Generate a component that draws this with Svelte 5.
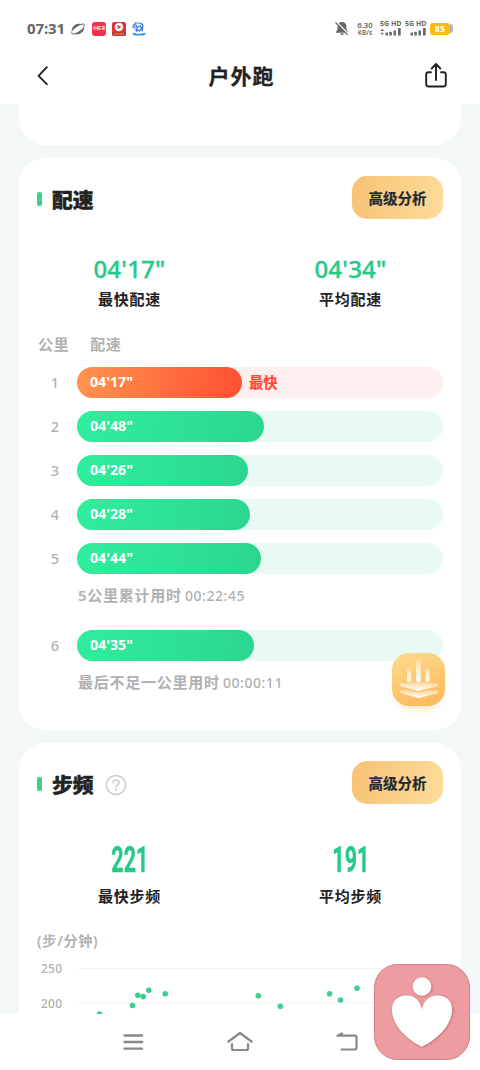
<script lang="ts">
  type Split = {
    km: number;
    pace: string;
    width: number;
    fastest?: boolean;
    note?: string;
    time?: string;
  };

  const TRACK = 366;

  const splits: Split[] = [
    { km: 1, pace: `04'17"`, width: 165, fastest: true },
    { km: 2, pace: `04'48"`, width: 187 },
    { km: 3, pace: `04'26"`, width: 171 },
    { km: 4, pace: `04'28"`, width: 173 },
    { km: 5, pace: `04'44"`, width: 184, note: '5公里累计用时', time: '00:22:45' },
    { km: 6, pace: `04'35"`, width: 177, note: '最后不足一公里用时', time: '00:00:11' },
  ];

  // cadence samples, in chart pixels
  const samples = [
    [22.5, 57], [55.5, 48.5], [60.8, 38.2], [66.2, 39.6], [71.8, 33.3], [88.2, 36.8],
    [181.3, 38.8], [203.3, 49.2], [252.6, 36.8], [263.5, 43], [280, 31.3],
  ];
</script>

{#snippet sectionHead(title: string, help: boolean)}
  <div class="section-head">
    <span class="mark"></span>
    <h2>{title}</h2>
    {#if help}
      <svg class="help" viewBox="0 0 22 22" width="22" height="22" fill="none" stroke="#cbcbcb" stroke-width="1.5" stroke-linecap="round">
        <circle cx="11" cy="11" r="9.6" />
        <path d="M8 8.9c0-4 6.2-3.9 6.1-.2 0 2.1-3 2.3-3 4.4" />
        <circle cx="11.1" cy="15.7" r=".4" />
      </svg>
    {/if}
    <button type="button" class="analyze">高级分析</button>
  </div>
{/snippet}

{#snippet signal()}
  <span class="signal">
    <b>5G HD</b>
    <svg viewBox="0 0 22 8" width="22" height="8" fill="#666">
      <path d="M0.500 3 2.200 0.800 4 3zM0.500 4.800 2.200 7 4 4.800z" />
      <rect x="5.5" y="4.5" width="2.5" height="3" rx=".6" />
      <rect x="9.3" y="3.700" width="2.5" height="3.800" rx=".6" />
      <rect x="13.5" y="2.500" width="2.5" height="5" rx=".6" />
      <rect x="18" y="0" width="2.700" height="7.500" rx=".6" />
    </svg>
  </span>
{/snippet}

<div class="screen">
  <header>
    <div class="status">
      <span class="clock">07:31</span>
      <svg class="planet" viewBox="0 0 14 12" width="14" height="12">
        <path d="M.7 8.500C.5 4 4 .6 8 .7c1.500 0 2.500.3 3.200.8C7 2.500 3 5.500.7 8.500zM13.200 3.500c.3 4.500-3 7.800-7.200 7.800-1.200 0-2.200-.2-3-.7C7 9.500 11 6.800 13.200 3.500z" fill="#666" />
        <path d="M.8 8.500C.2 11 2 11.600 4 10.800M10.500 1.300c2.500-1 3.500.2 2.500 2.500" fill="none" stroke="#666" stroke-width="1" />
      </svg>
      <span class="app">小红书</span>
      <svg class="app-icon" viewBox="0 0 14 14" width="14" height="14">
        <rect width="14" height="14" rx="2" fill="#dd3438" />
        <circle cx="7" cy="5" r="4.200" fill="#fff" />
        <path d="M5.6 2.8v4.4L9.2 5z" fill="#d9363a" />
        <path d="M0 10h14v2a2 2 0 0 1-2 2H2a2 2 0 0 1-2-2z" fill="#c2382a" />
        <path d="M2 12h10" stroke="#f09a68" stroke-width="1.2" stroke-dasharray="2 .7" />
      </svg>
      <svg class="app-icon" viewBox="0 0 14 14" width="14" height="14" fill="none" stroke="#3474e0">
        <path d="M.8 3.500 3.500.900 8 1.200M.5 5.500l4-3.500M2 6.500 5.500 3.200" stroke-width="1.200" stroke-dasharray="2 .5" />
        <path d="M8 1.500c2.500.2 3.300 1.500 2.600 4L10 9.500M5 9.500 3.500 7.500M5 5.500l3-1.500 2 2-2.500 3-2.500-1z" stroke-width="1.300" />
        <path d="M0 11h3.500l1 .8h5l1-.8H14l-2 2.600H2z" fill="#3398f4" stroke="none" />
      </svg>

      <span class="spacer"></span>

      <svg viewBox="0 0 14 15" width="14" height="15">
        <path d="M7 1c3 0 4.4 2 4.4 4.8 0 3 .6 3.8 1.6 5v1H1v-1c1-1.200 1.600-2 1.600-5C2.600 3 4 1 7 1zM5.300 12.500h3.400a1.700 1.700 0 0 1-3.400 0z" fill="#666" />
        <path d="M1.200.7 14 13.500" stroke="#fff" stroke-width="1.500" />
        <path d="M.5 1.500 12.800 13.800" stroke="#666" stroke-width="1.200" />
      </svg>
      <span class="speed"><b>6.30</b><i>KB/s</i></span>
      {@render signal()}
      <span class="second">{@render signal()}</span>
      <span class="battery">85</span>
      <span class="battery-tip"></span>
    </div>
    <div class="titlebar">
      <svg viewBox="0 0 12 20" width="12" height="20" fill="none" stroke="#222" stroke-width="1.9" stroke-linecap="round" stroke-linejoin="round">
        <path d="M9.800 1.200 1.600 9.800 9.800 18.200" />
      </svg>
      <h1>户外跑</h1>
      <svg viewBox="0 0 22 26" width="22" height="26" fill="none" stroke="#222" stroke-width="1.9" stroke-linecap="round" stroke-linejoin="round">
        <path d="M6 9.200H3.500Q1.200 9.200 1.200 11.500v9.500q0 2.500 2.500 2.500h14.600q2.500 0 2.500-2.500v-9.500q0-2.300-2.300-2.300H16M11 17V1.200M6.700 5.500 11 1 15.300 5.500" />
      </svg>
    </div>
  </header>

  <main>
    <section class="card previous"></section>

    <section class="card pace">
      {@render sectionHead('配速', false)}
      <div class="stats">
        <div class="stat"><strong>04'17"</strong><span>最快配速</span></div>
        <div class="stat"><strong>04'34"</strong><span>平均配速</span></div>
      </div>
      <div class="columns"><span>公里</span><span>配速</span></div>
      <div class="splits">
        {#each splits as split}
          <div class="split">
            <span class="km">{split.km}</span>
            <div class="track" class:fastest={split.fastest}>
              <div class="bar" style="width: {(split.width / TRACK) * 100}%">{split.pace}</div>
              {#if split.fastest}<em>最快</em>{/if}
            </div>
          </div>
          {#if split.note}
            <p class="note">{split.note} <span>{split.time}</span></p>
          {/if}
        {/each}
      </div>
    </section>

    <section class="card cadence">
      {@render sectionHead('步频', true)}
      <div class="stats">
        <div class="stat"><strong>221</strong><span>最快步频</span></div>
        <div class="stat"><strong>191</strong><span>平均步频</span></div>
      </div>
      <p class="unit">(步/分钟)</p>
      <div class="chart">
        <div class="axis"><span>250</span><span>200</span></div>
        <svg viewBox="0 0 366 64" width="366" height="64">
          <path d="M0 11.500h366M0 46h366" stroke="#f3f4f4" />
          {#each samples as [x, y]}
            <circle cx={x} cy={y} r="2.800" fill="#3ecf8e" />
          {/each}
        </svg>
      </div>
    </section>
  </main>

  <nav>
    <svg viewBox="0 0 22 18" width="22" height="18" stroke="#888" stroke-width="2.300" stroke-linecap="round">
      <path d="M2.500 2.500h17.600M2.500 9h17.600M2.500 15.700h17.600" />
    </svg>
    <svg viewBox="0 0 26 20" width="26" height="20" fill="none" stroke="#888" stroke-width="2.200" stroke-linecap="round" stroke-linejoin="round">
      <path d="M1.500 9.500 13 1l11.500 8.500M5 12v4.500Q5 18 6.500 18h13q1.500 0 1.500-1.500V12" />
    </svg>
    <svg viewBox="0 0 22 20" width="22" height="20" fill="none" stroke="#888" stroke-width="2.200" stroke-linecap="round" stroke-linejoin="round">
      <path d="M6 1.500 1.500 3.700H18.500q2 0 2 2v9.800q0 2-2 2H5.500" />
    </svg>
  </nav>

  <svg class="assistant" viewBox="0 0 77 84" width="77" height="84">
    <defs>
      <linearGradient id="gold" x1="0" y1="0" x2=".4" y2="1">
        <stop offset="0" stop-color="#fddc8c" />
        <stop offset="1" stop-color="#fdbc61" />
      </linearGradient>
      <linearGradient id="fadeDown" x1="0" y1="0" x2="0" y2="1">
        <stop offset="0" stop-color="#fff" stop-opacity=".3" />
        <stop offset="1" stop-color="#fff" />
      </linearGradient>
      <filter id="glow" x="-40%" y="-40%" width="180%" height="180%"><feGaussianBlur stdDeviation="5" /></filter>
    </defs>
    <rect x="16" y="20" width="45" height="45" rx="16" fill="#fdc77a" opacity=".5" filter="url(#glow)" />
    <rect x="12" y="9" width="53" height="53" rx="17" fill="url(#gold)" />
    <g fill="url(#fadeDown)">
      <rect x="27" y="24" width="4.200" height="14" rx="2.100" />
      <rect x="36" y="15.500" width="4.800" height="22.500" rx="2.300" />
      <rect x="45.500" y="24" width="4.200" height="14" rx="2.100" />
      <path d="M20 39.500 38.500 38 58 39.500v2.500L38.500 47 20 42z" />
      <path d="M20 46h8l10.500 2.500L49 46h9v3L38.500 54.300 20 49z" />
    </g>
  </svg>

  <svg class="heart" viewBox="0 0 96 96" width="96" height="96">
    <defs>
      <filter id="lift" x="-20%" y="-20%" width="140%" height="140%">
        <feDropShadow dx=".7" dy=".7" stdDeviation="1.100" flood-color="#8f4548" flood-opacity=".6" />
      </filter>
    </defs>
    <rect x=".5" y=".5" width="95" height="95" rx="23" fill="#ed9ca1" stroke="#c98388" />
    <g fill="#fff" filter="url(#lift)">
      <circle cx="48" cy="22.500" r="9.300" />
      <path d="M48 46C47 37.500 41 31.500 32.500 31.500 24 31.500 18 37 18 45.500c0 14.500 13 29 30 37.200 17-8.200 30-22.700 30-37.200 0-8.500-6-14-14.500-14C55 31.500 49 37.500 48 46z" />
    </g>
  </svg>
</div>

<style>
  :global(body) {
    margin: 0;
    background: #fff;
  }

  .screen {
    position: relative;
    width: 480px;
    height: 1070px;
    overflow: hidden;
    display: flex;
    flex-direction: column;
    background: #fff;
    color: #222;
    font-family: "Noto Sans", "Noto Sans CJK SC", sans-serif;
  }

  h1, h2, p {
    margin: 0;
  }

  header {
    height: 104px;
    flex: none;
  }

  .status {
    height: 50px;
    padding: 7px 27px 0;
    box-sizing: border-box;
    display: flex;
    align-items: center;
    color: #666;
  }

  .clock {
    width: 44px;
    margin-top: -2px;
    font-size: 15px;
    font-weight: 700;
    letter-spacing: -0.1px;
    line-height: 20px;
  }

  .app {
    width: 14px;
    height: 14px;
    margin: 0 6px 0 7px;
    border-radius: 3px;
    background: #f5304f;
    color: #fff;
    font-size: 4px;
    font-weight: 700;
    line-height: 14px;
    text-align: center;
  }

  .app-icon {
    margin-right: 6px;
  }

  .spacer {
    flex: 1;
  }

  .speed {
    width: 18px;
    margin: 0 6px 0 7px;
    display: flex;
    flex-direction: column;
    align-items: center;
    line-height: 7px;
    font-size: 7.8px;
  }

  .speed b {
    font-weight: 600;
  }

  .speed i {
    font-style: normal;
    font-weight: 600;
    font-size: 6.5px;
  }

  .signal {
    display: flex;
    flex-direction: column;
    width: 22px;
    margin: -2px 3px 0 0;
    font-size: 7px;
    line-height: 9px;
    white-space: nowrap;
  }

  .second path {
    display: none;
  }

  .battery {
    width: 20px;
    height: 12px;
    border-radius: 3px;
    background: #fbb913;
    color: #fff;
    font-size: 9px;
    font-weight: 700;
    line-height: 12px;
    text-align: center;
  }

  .battery-tip {
    width: 3px;
    height: 9px;
    border-radius: 0 4px 4px 0;
    background: #b3b3b3;
  }

  .titlebar {
    height: 52px;
    padding: 0 33px 0 37px;
    display: flex;
    align-items: center;
    justify-content: space-between;
  }

  h1 {
    margin-left: 9px;
    font-size: 21px;
    font-weight: 700;
    letter-spacing: 1px;
    line-height: 30px;
    -webkit-text-stroke: 0.3px #222;
  }

  main {
    height: 910px;
    flex: none;
    box-sizing: border-box;
    padding: 0 19px;
    overflow: hidden;
    background: #f3f7f8;
    display: flex;
    flex-direction: column;
    gap: 13px;
  }

  .card {
    flex: none;
    box-sizing: border-box;
    padding: 19px 18px 0;
    border-radius: 26px;
    background: #fff;
  }

  .previous {
    height: 41px;
    border-radius: 0 0 26px 26px;
  }

  .pace {
    height: 572px;
  }

  .cadence {
    height: 400px;
  }

  .section-head {
    height: 42px;
    display: flex;
    align-items: center;
  }

  .mark {
    width: 5px;
    height: 14px;
    margin-top: 2px;
    border-radius: 2px;
    background: #3ccf90;
  }

  h2 {
    margin: 4px 0 0 10px;
    font-size: 20.8px;
    font-weight: 900;
    line-height: 30px;
    -webkit-text-stroke: 0.4px #222;
  }

  .help {
    margin: 4px 0 0 11px;
  }

  .analyze {
    width: 91px;
    height: 43px;
    margin: -1px 0 0 auto;
    padding: 0;
    border: none;
    border-radius: 15px;
    background: linear-gradient(100deg, #f7c274, #fddc9b);
    color: #222933;
    font: 700 14.5px "Noto Sans CJK SC", sans-serif;
    -webkit-text-stroke: 0.2px #222933;
  }

  .stats {
    display: grid;
    grid-template-columns: 1fr 1fr;
    margin: 35px -18px 0;
  }

  .stat {
    display: flex;
    flex-direction: column;
    align-items: center;
  }

  .stat strong {
    color: #25ca86;
    font-size: 24px;
    font-weight: 500;
    letter-spacing: 0.2px;
    line-height: 30px;
    -webkit-text-stroke: 0.3px #25ca86;
  }

  .stat span {
    font-size: 15px;
    font-weight: 700;
    letter-spacing: 0.8px;
    line-height: 30px;
  }

  .columns {
    display: flex;
    gap: 21px;
    margin: 15px 0 0 1px;
    color: #b1b1b1;
    font-size: 15px;
    font-weight: 700;
    letter-spacing: 0.6px;
    line-height: 30px;
  }

  .splits {
    margin-top: 7.5px;
  }

  .split {
    height: 31px;
    margin-bottom: 13px;
    display: flex;
    align-items: center;
  }

  .km {
    width: 36px;
    margin-right: 4px;
    color: #b1b1b1;
    font-size: 14.5px;
    font-weight: 500;
    line-height: 29px;
    text-align: center;
  }

  .track {
    flex: 1;
    height: 31px;
    border-radius: 16px;
    background: #e9faf5;
    display: flex;
    align-items: center;
  }

  .track.fastest {
    background: #ffeeee;
  }

  .bar {
    height: 31px;
    box-sizing: border-box;
    padding-left: 13px;
    border-radius: 16px;
    background: linear-gradient(100deg, #30ee9c, #2bd68f);
    color: #fff;
    font-size: 14.2px;
    font-weight: 700;
    line-height: 30px;
  }

  .fastest .bar {
    background: linear-gradient(100deg, #ff9450, #ff4f31);
  }

  .track em {
    margin-left: 7px;
    color: #ff4b31;
    font-size: 14.3px;
    font-style: normal;
    font-weight: 700;
    line-height: 29px;
    -webkit-text-stroke: 0.2px #ff4b31;
  }

  .note {
    height: 30px;
    margin: -7px 0 20px 41px;
    color: #b1b1b1;
    font-size: 15px;
    font-weight: 600;
    letter-spacing: 0.75px;
    line-height: 30px;
    white-space: nowrap;
  }

  .note span {
    margin-left: -1.5px;
    font-size: 14px;
    font-weight: 500;
    letter-spacing: 0.55px;
  }

  .cadence strong {
    height: 40px;
    font-family: Roboto, sans-serif;
    font-size: 37px;
    font-weight: 700;
    letter-spacing: 0;
    line-height: 41px;
    -webkit-text-stroke: 0.4px #25ca86;
    transform: scaleX(0.58);
  }

  .cadence .stat span {
    margin-top: 2px;
  }

  .unit {
    margin-top: 15px;
    color: #b1b1b1;
    font-size: 14px;
    font-weight: 600;
    letter-spacing: 0.8px;
    line-height: 30px;
  }

  .chart {
    display: flex;
    margin-top: 1px;
  }

  .axis {
    width: 40px;
    display: flex;
    flex-direction: column;
    color: #b1b1b1;
    font-size: 12px;
    font-weight: 500;
    letter-spacing: 0.2px;
  }

  .axis span {
    height: 34.5px;
    padding-left: 4px;
    line-height: 24px;
  }

  nav {
    height: 56px;
    display: flex;
    align-items: center;
    justify-content: center;
    gap: 83px;
  }

  .assistant {
    position: absolute;
    left: 380px;
    top: 644px;
  }

  .heart {
    position: absolute;
    left: 374px;
    top: 964px;
  }
</style>
